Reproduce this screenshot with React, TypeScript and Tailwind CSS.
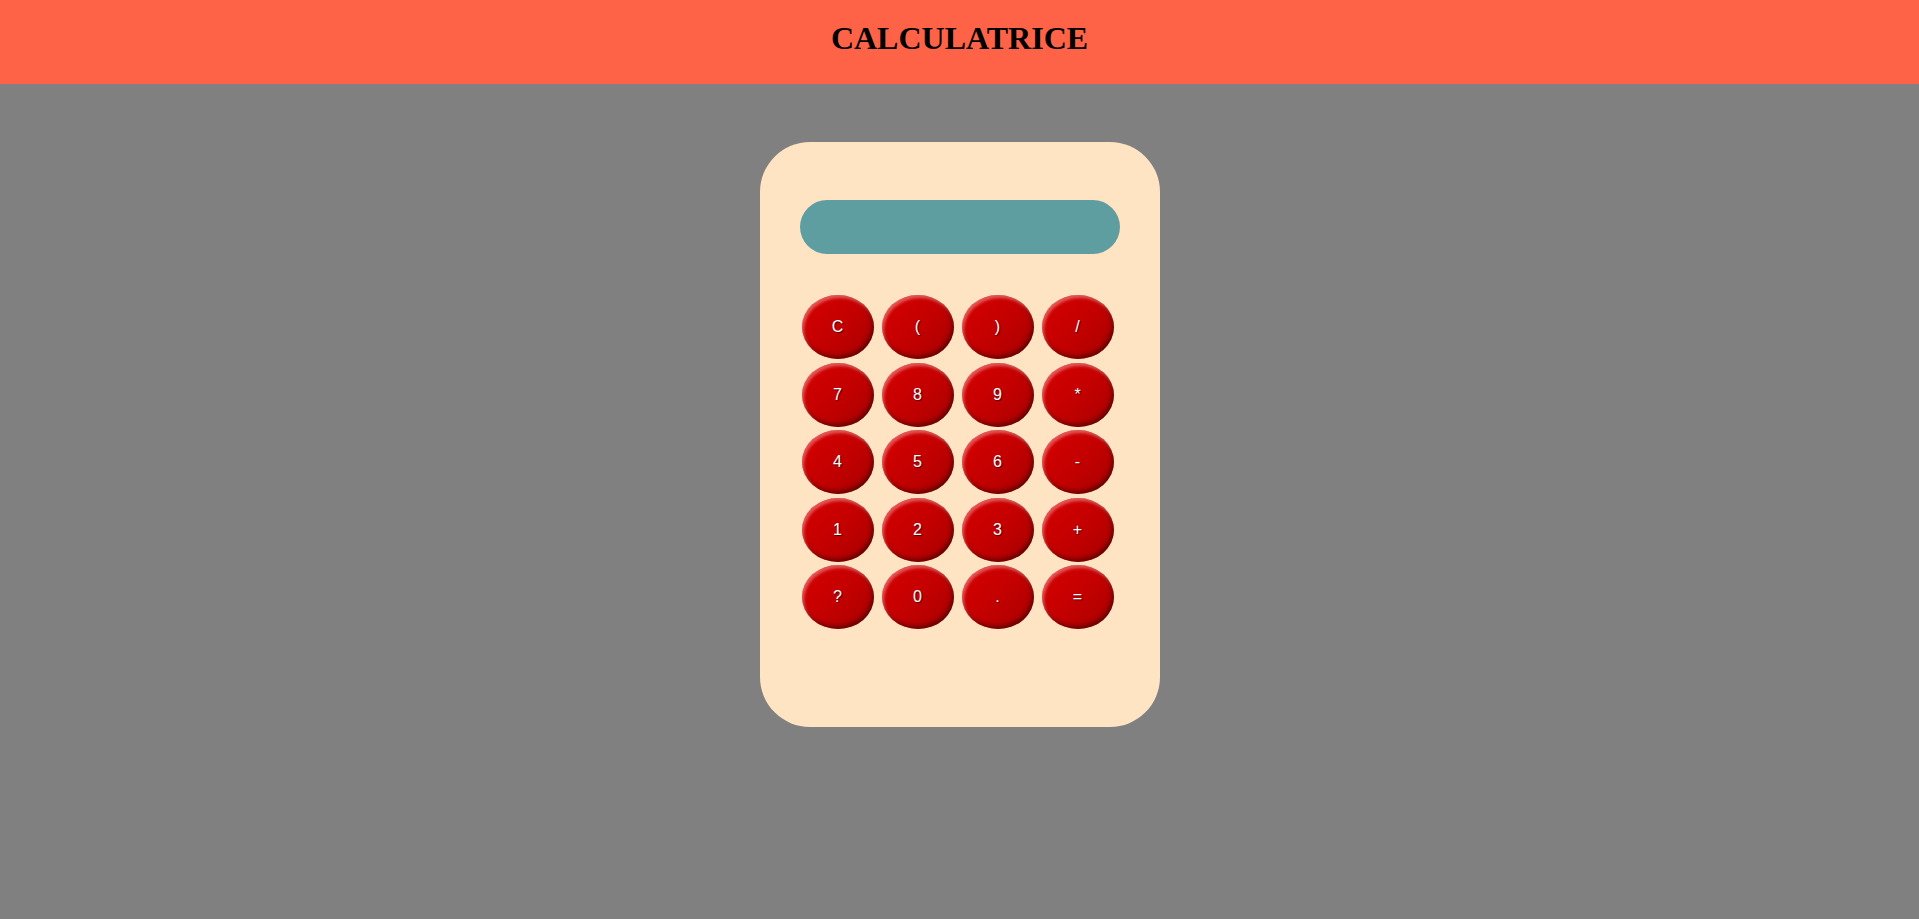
import React from "react";

const keys = [
  "C", "(", ")", "/",
  "7", "8", "9", "*",
  "4", "5", "6", "-",
  "1", "2", "3", "+",
  "?", "0", ".", "=",
];

export default function App() {
  return (
    <div className="min-h-[919px] bg-[#808080] flex flex-col">
      <header className="h-[84px] bg-[#ff6347] flex items-center justify-center">
        <h1
          className="text-[32px] font-bold text-black leading-none pb-[8px]"
          style={{ fontFamily: '"Liberation Serif", "Times New Roman", serif' }}
        >
          CALCULATRICE
        </h1>
      </header>
      <div className="flex justify-center pt-[58px]">
        <div className="w-[400px] h-[585px] bg-[#ffe4c4] rounded-[50px] pt-[58px] px-[40px] flex flex-col items-start">
          <div className="w-[320px] h-[54px] rounded-full bg-[#5f9ea0]" />
          <div className="mt-[41px] ml-[2px] grid grid-cols-[repeat(4,72px)] auto-rows-[64px] gap-x-[8px] gap-y-[3.5px]">
            {keys.map((k) => (
              <button
                key={k}
                className="w-[72px] h-[64px] rounded-[50%] bg-[linear-gradient(135deg,#d60000_0%,#c40000_50%,#a80000_100%)] shadow-[inset_2px_3px_3px_rgba(255,190,190,0.45),inset_-2px_-3px_4px_rgba(60,0,0,0.6)] text-white text-[16px] [text-shadow:1px_1px_1px_rgba(60,0,0,0.9)] flex items-center justify-center"
                style={{ fontFamily: '"Liberation Sans", Arial, sans-serif' }}
              >
                {k}
              </button>
            ))}
          </div>
        </div>
      </div>
    </div>
  );
}
